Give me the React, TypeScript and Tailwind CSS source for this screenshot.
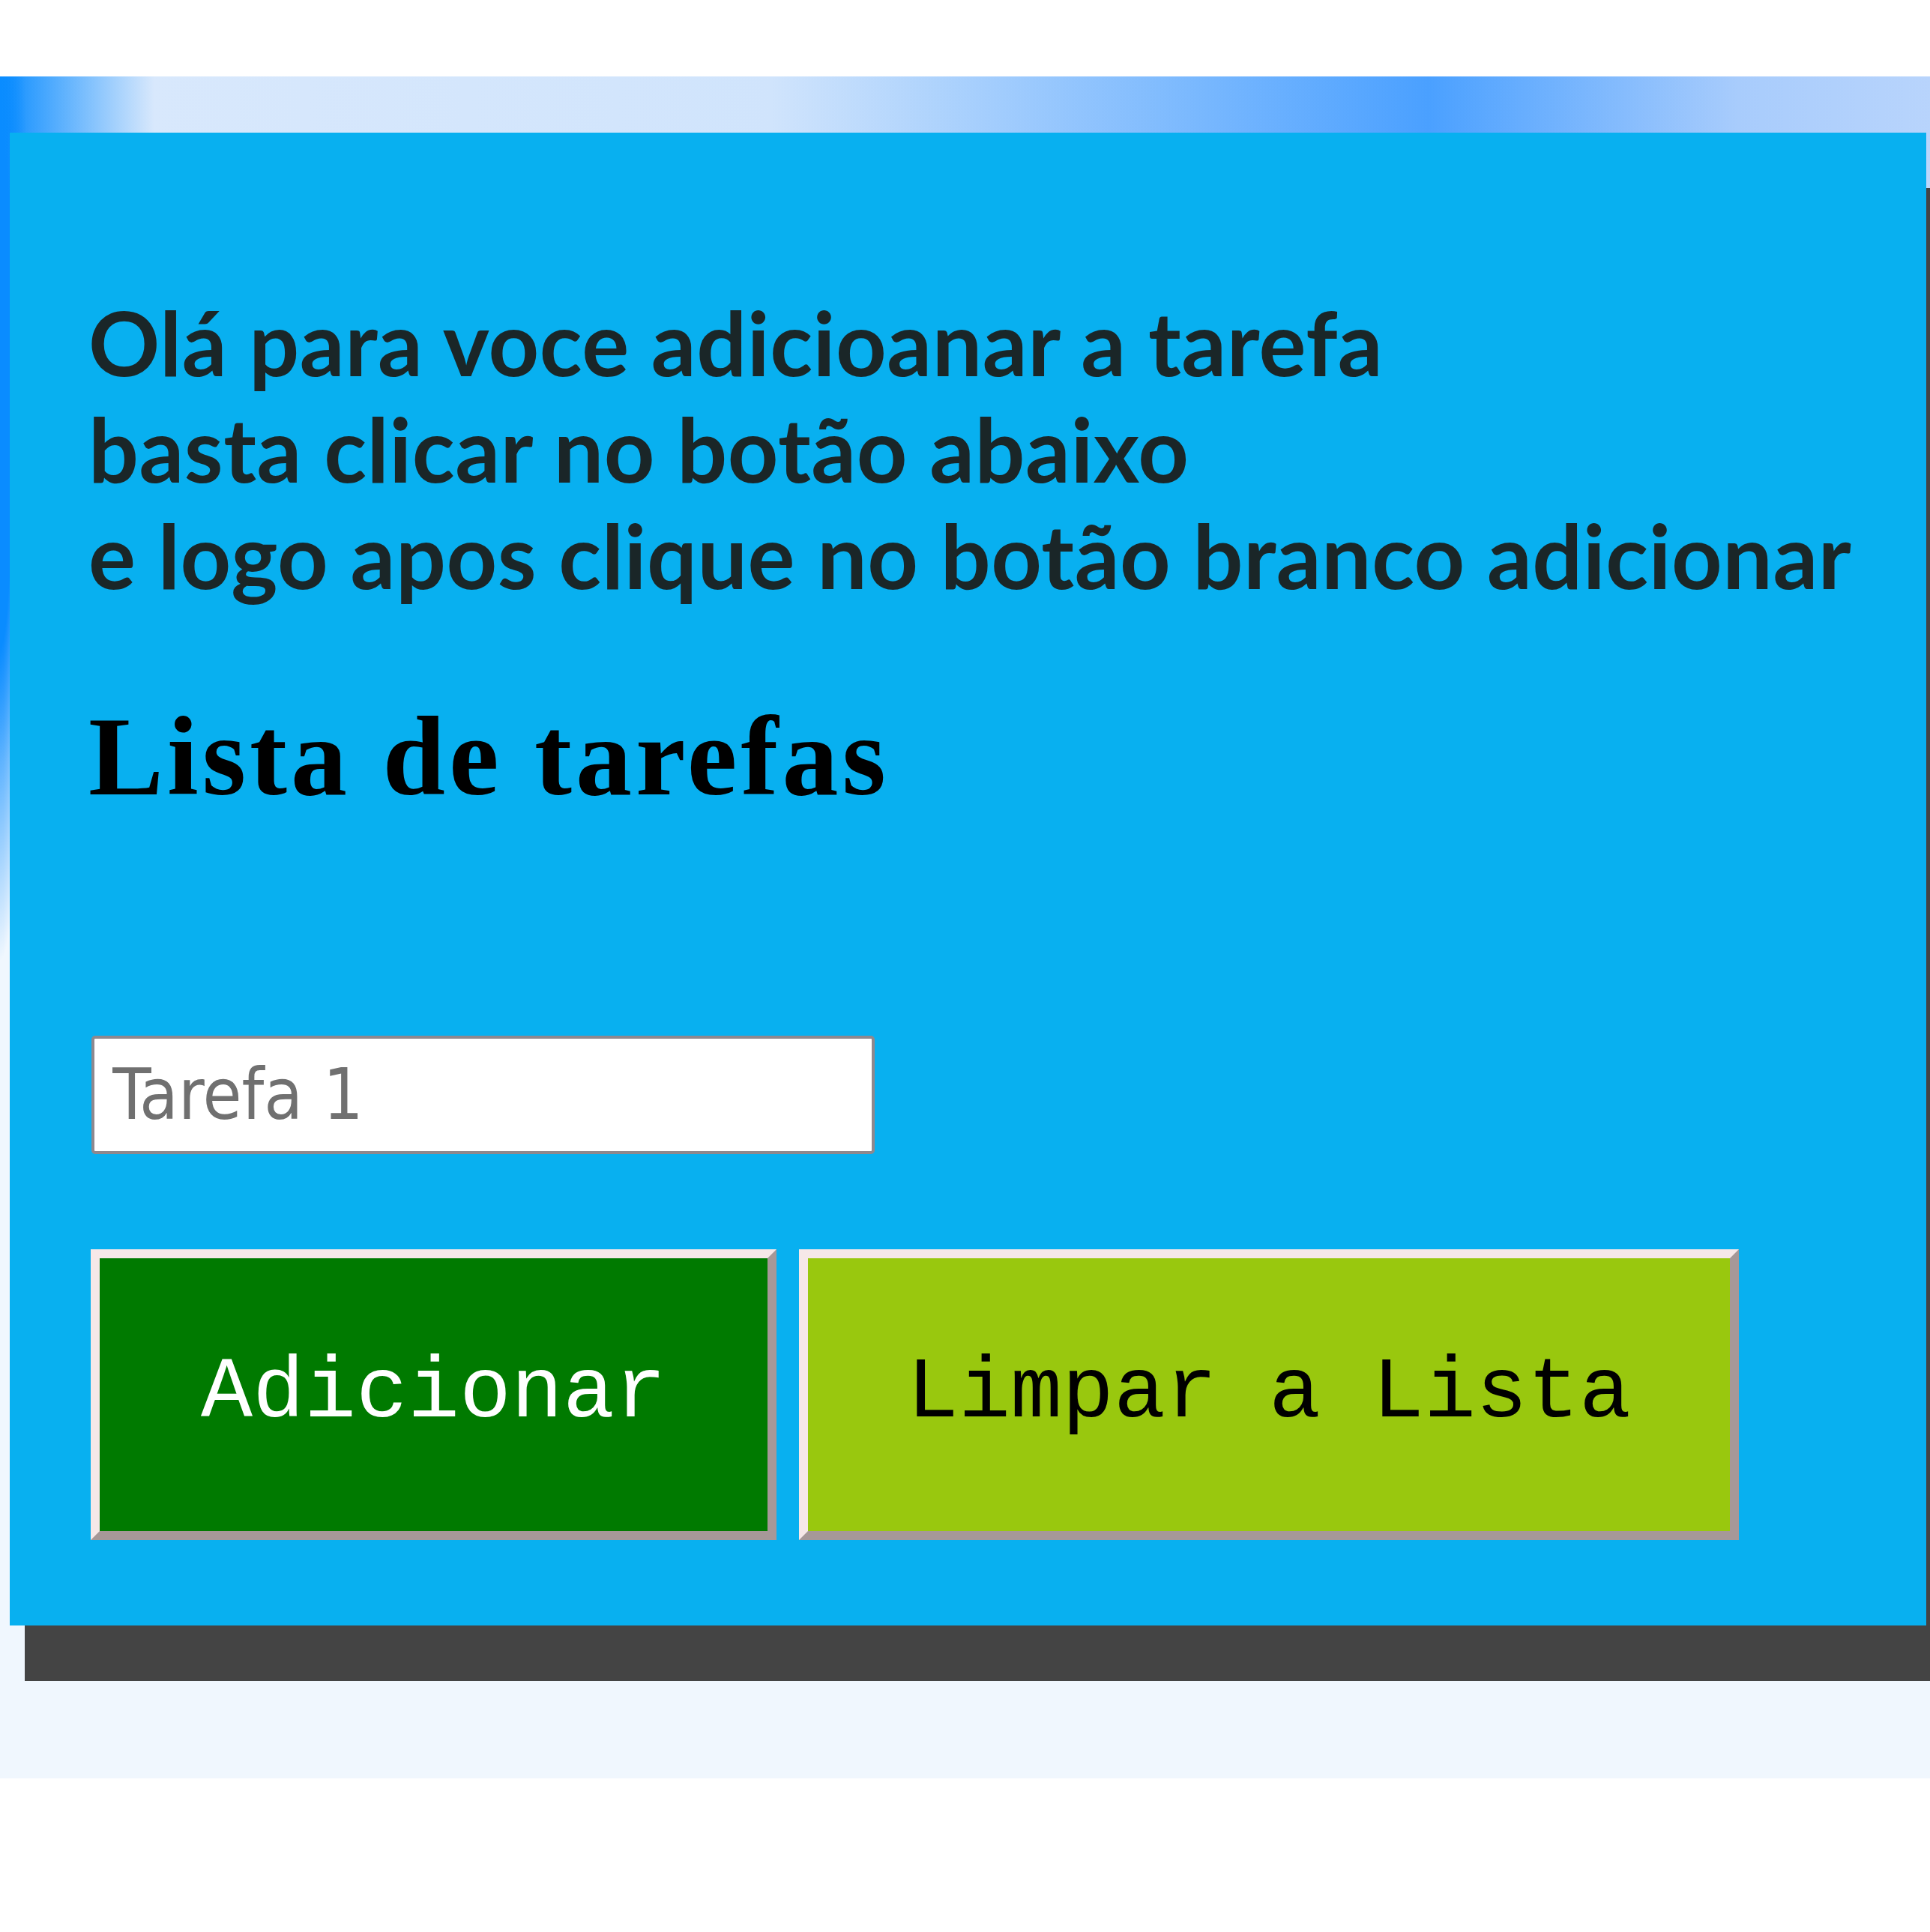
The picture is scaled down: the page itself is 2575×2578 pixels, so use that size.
export default function App() {
  return (
    <div className="min-h-screen bg-white pt-[102px]">
      {/* page background band */}
      <div className="h-[2271px] overflow-hidden pt-[75px] pl-[13px] bg-[radial-gradient(40px_760px_at_0_420px,#0a8cff_45%,transparent),linear-gradient(to_bottom,transparent_3%,#f0f7fe_40%),linear-gradient(to_right,#0a8cff,#d8e8fc_8%,#d0e4fc_40%,#4aa0ff_74%,#a8ccfc_90%,#b8d4fc)]">
        <div className="w-[2557px] h-[1992px] bg-[#08b0f0] shadow-[20px_74px_0_#444444] pt-[209px] pl-[105px]">
          <p className="font-['Lato',sans-serif] font-bold text-[118px] leading-[142px] tracking-[0.5px] text-[#1a2628]">
            Olá para voce adicioanar a tarefa
            <br />
            basta clicar no botão abaixo
            <br />
            e logo apos clique no botão branco adicionar
          </p>

          <h2 className="mt-[111px] font-['Liberation_Serif',serif] font-bold text-[150px] leading-[1.15] tracking-[5px] text-black">
            Lista de tarefas
          </h2>

          <ul className="h-[286px]"></ul>

          <input
            type="text"
            placeholder="Tarefa 1"
            className="ml-[4px] block w-[1045px] h-[158px] border-4 border-[#8e888e] rounded-[5px] bg-white pl-[24px] font-['DejaVu_Sans_Condensed','DejaVu_Sans',sans-serif] text-[94px] text-[#222] placeholder:text-[#707070] outline-none"
          />

          <div className="ml-[3px] mt-[127px] flex gap-[30px]">
            <button className="w-[915px] h-[388px] border-[12px] border-t-[#f6e8e8] border-l-[#f6e8e8] border-b-[#a69898] border-r-[#a69898] bg-[#007a00] font-['Liberation_Mono',monospace] text-[115px] text-white">
              Adicionar
            </button>
            <button className="w-[1254px] h-[388px] border-[12px] border-t-[#f6e8e8] border-l-[#f6e8e8] border-b-[#a69898] border-r-[#a69898] bg-[#99c80e] font-['Liberation_Mono',monospace] text-[115px] text-black">
              Limpar a Lista
            </button>
          </div>
        </div>
      </div>
    </div>
  )
}
